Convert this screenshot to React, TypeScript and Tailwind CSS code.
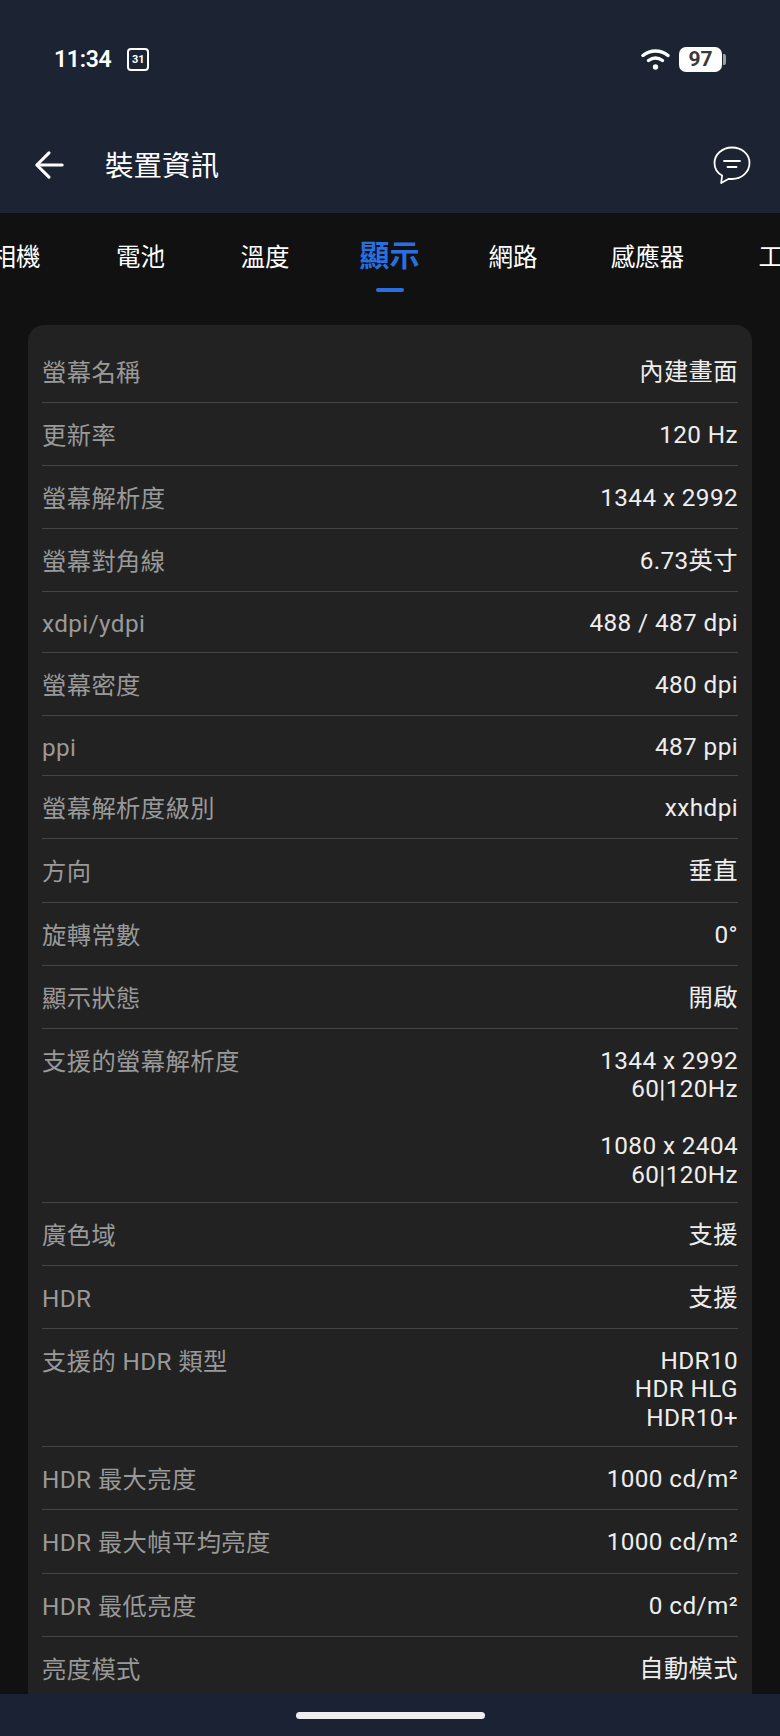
const font = { fontFamily: '"Roboto","Noto Sans CJK TC",sans-serif' };

type Row = { label: string; value: string[]; h: string };

const rows: Row[] = [
  { label: "螢幕名稱", value: ["內建畫面"], h: "h-[78px] pt-[31px]" },
  { label: "更新率", value: ["120 Hz"], h: "h-[63px] pt-[16px]" },
  { label: "螢幕解析度", value: ["1344 x 2992"], h: "h-[63px] pt-[16px]" },
  { label: "螢幕對角線", value: ["6.73英寸"], h: "h-[63px] pt-[16px]" },
  { label: "xdpi/ydpi", value: ["488 / 487 dpi"], h: "h-[61px] pt-[15px]" },
  { label: "螢幕密度", value: ["480 dpi"], h: "h-[63px] pt-[16px]" },
  { label: "ppi", value: ["487 ppi"], h: "h-[60px] pt-[15px]" },
  { label: "螢幕解析度級別", value: ["xxhdpi"], h: "h-[63px] pt-[16px]" },
  { label: "方向", value: ["垂直"], h: "h-[64px] pt-[16px]" },
  { label: "旋轉常數", value: ["0°"], h: "h-[63px] pt-[16px]" },
  { label: "顯示狀態", value: ["開啟"], h: "h-[63px] pt-[16px]" },
  { label: "支援的螢幕解析度", value: ["1344 x 2992", "60|120Hz", "", "1080 x 2404", "60|120Hz"], h: "h-[174px] pt-[16px]" },
  { label: "廣色域", value: ["支援"], h: "h-[63px] pt-[16px]" },
  { label: "HDR", value: ["支援"], h: "h-[63px] pt-[16px]" },
  { label: "支援的 HDR 類型", value: ["HDR10", "HDR HLG", "HDR10+"], h: "h-[118px] pt-[16px]" },
  { label: "HDR 最大亮度", value: ["1000 cd/m²"], h: "h-[63px] pt-[16px]" },
  { label: "HDR 最大幀平均亮度", value: ["1000 cd/m²"], h: "h-[64px] pt-[16px]" },
  { label: "HDR 最低亮度", value: ["0 cd/m²"], h: "h-[63px] pt-[16px]" },
  { label: "亮度模式", value: ["自動模式"], h: "h-[63px] pt-[16px]" },
];

const tabs = [
  { t: "相機", w: "w-[124px]" },
  { t: "電池", w: "w-[125px]" },
  { t: "溫度", w: "w-[124px]" },
  { t: "顯示", w: "w-[125px]", active: true },
  { t: "網路", w: "w-[122px]" },
  { t: "感應器", w: "w-[147px]" },
  { t: "工具", w: "w-[124px]" },
];

export default function App() {
  return (
    <div className="w-[780px] h-[1736px] bg-[#111111] flex flex-col overflow-hidden" style={font}>
      <header className="bg-[#1c2333] h-[213px] shrink-0 flex flex-col">
        <div className="h-[116px] pt-[43px] pl-[54px] pr-[54px] flex items-start justify-between">
          <div className="flex items-center gap-[16px] h-[32px]">
            <span className="text-white font-semibold text-[23px] leading-none tracking-[-0.3px]">11:34</span>
            <div className="w-[22px] h-[23px] border-2 border-white rounded-[4px] flex items-center justify-center">
              <span className="text-white font-bold text-[11px] leading-none">31</span>
            </div>
          </div>
          <div className="flex items-center h-[32px]">
            <svg width="29" height="24" viewBox="0 0 29 24" className="mr-[9px]" fill="none" stroke="white" strokeLinecap="round" strokeWidth="3.4">
              <path d="M2 8.5C9.5 2.5 19.5 2.5 27 8.5" />
              <path d="M7.5 13.5C11.8 10.3 17.2 10.3 21.5 13.5" />
              <circle cx="14.5" cy="20" r="2.7" fill="white" stroke="none" />
            </svg>
            <div className="w-[43px] h-[25px] bg-white rounded-[7px] flex items-center justify-center">
              <span className="text-[#3a3a3a] font-bold text-[21px] leading-none">97</span>
            </div>
            <div className="w-[3px] h-[11px] bg-[#9a9ea6] rounded-r-[2px] ml-[1px]" />
          </div>
        </div>
        <div className="flex-1 flex items-start pl-[34px] pr-[29px] pt-[33px]">
          <svg width="30" height="30" viewBox="0 0 32 32" className="mt-[1px]" fill="none" stroke="white" strokeWidth="3.3" strokeLinecap="round" strokeLinejoin="round">
            <path d="M30 16H4" />
            <path d="M16 3 3 16l13 13" />
          </svg>
          <span className="ml-[41px] text-white text-[28.5px] leading-[36px]">裝置資訊</span>
          <svg width="38" height="38" viewBox="0 0 38 38" className="ml-auto -mt-[3px]" fill="none" stroke="white" strokeWidth="1.8" strokeLinecap="round" strokeLinejoin="round">
            <path d="M19 1.5C9.3 1.5 1.5 8.2 1.5 17c0 5.6 3 10 7.6 12.5L8.2 37l7.6-4.2c1 .2 2.1.2 3.2.2 9.7 0 17.5-7 17.5-16S28.7 1.5 19 1.5Z" />
            <path d="M11 15h16" />
            <path d="M14.5 21h9" />
          </svg>
        </div>
      </header>

      <nav className="h-[112px] shrink-0 flex items-start -ml-[46px] overflow-hidden">
        {tabs.map((tab) => (
          <div key={tab.t} className={`${tab.w} shrink-0 h-full flex flex-col items-center`}>
            {tab.active ? (
              <>
                <span className="mt-[25px] text-[#2a6fdf] text-[30px] leading-[36px] font-bold">{tab.t}</span>
                <span className="mt-[14px] w-[28px] h-[4px] rounded-full bg-[#2a6fdf]" />
              </>
            ) : (
              <span className="mt-[29px] text-white text-[24.5px] leading-[32px]">{tab.t}</span>
            )}
          </div>
        ))}
      </nav>

      <main className="flex-1 min-h-0 px-[28px] overflow-hidden">
        <section className="bg-[#222222] rounded-t-[16px] pl-[14px] pr-[14px]">
          {rows.map((r, i) => (
            <div
              key={r.label}
              className={`${r.h} flex justify-between items-start ${i < rows.length - 1 ? "border-b border-[#444444]" : ""}`}
            >
              <span className="text-[#999999] text-[24.3px] leading-[34px] tracking-[0.4px]">{r.label}</span>
              <div className="text-right text-[#eeeeee] text-[24.3px] leading-[28.4px] pt-[2px] tracking-[0.4px]">
                {r.value.map((v, j) => (
                  <div key={j} className={v === "" ? "h-[28.4px]" : ""}>{v}</div>
                ))}
              </div>
            </div>
          ))}
        </section>
      </main>

      <footer className="h-[42px] shrink-0 bg-[#1b2233] flex justify-center items-start pt-[18px]">
        <div className="w-[189px] h-[7px] rounded-full bg-[#eeeeee]" />
      </footer>
    </div>
  );
}
